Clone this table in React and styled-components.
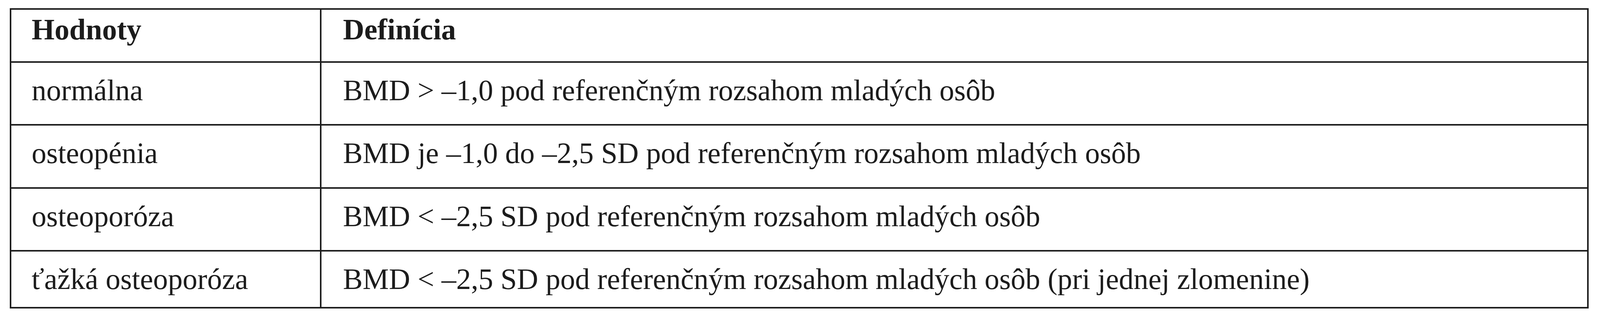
import React from "react";
import styled, { createGlobalStyle } from "styled-components";

const GlobalStyle = createGlobalStyle`
  html, body {
    margin: 0;
    padding: 0;
    background: #ffffff;
  }
`;

// table spans the page with the same gutters as the scan (25px left, 29px right)
const Page = styled.div`
  padding: 21px 29px 0 25px;
  font-family: "Liberation Serif", "Times New Roman", serif;
  color: #1c1c1c;
`;

const Table = styled.div`
  box-sizing: border-box;
  width: 100%;
  max-width: 4412px;
  border: 4px solid #1e1e1e;
`;

const Row = styled.div`
  display: grid;
  grid-template-columns: 794px 1fr;
  height: ${p => p.$height}px;
  border-top: ${p => (p.$first ? "none" : "4px solid #1e1e1e")};
`;

const Cell = styled.div`
  box-sizing: border-box;
  padding: ${p => p.$top}px 0 0 ${p => p.$left}px;
  font-size: 75.5px;
  line-height: 76px;
  font-weight: ${p => (p.$head ? 700 : 400)};
  white-space: nowrap;
  border-right: ${p => (p.$divider ? "4px solid #1e1e1e" : "none")};
`;

const rows = [
  ["normálna", "BMD > –1,0 pod referenčným rozsahom mladých osôb"],
  ["osteopénia", "BMD je –1,0 do –2,5 SD pod referenčným rozsahom mladých osôb"],
  ["osteoporóza", "BMD < –2,5 SD pod referenčným rozsahom mladých osôb"],
  [
    "ťažká osteoporóza",
    "BMD < –2,5 SD pod referenčným rozsahom mladých osôb (pri jednej zlomenine)"
  ]
];

const heights = [153, 154, 153, 138];

const App = () => (
  <Page>
    <GlobalStyle />
    <Table>
      <Row $first $height={132}>
        <Cell $head $divider $top={13} $left={52}>
          Hodnoty
        </Cell>
        <Cell $head $top={13} $left={55}>
          Definícia
        </Cell>
      </Row>
      {rows.map(([value, definition], idx) => (
        <Row key={idx} $height={heights[idx] + 4}>
          <Cell $divider $top={33} $left={52}>
            {value}
          </Cell>
          <Cell $top={33} $left={55}>
            {definition}
          </Cell>
        </Row>
      ))}
    </Table>
  </Page>
);

export default App;
